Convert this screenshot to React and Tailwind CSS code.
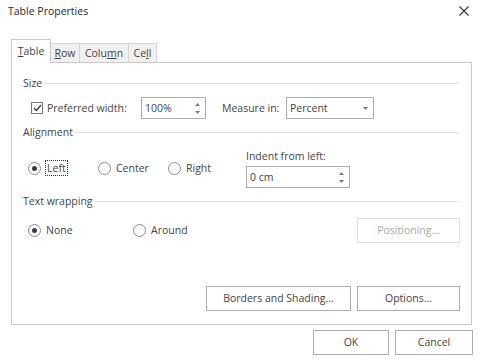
import React from "react";

function SpinArrows() {
  return (
    <div className="flex flex-col items-center gap-[5px] mr-[5px]">
      <svg width="5" height="3" viewBox="0 0 5 3"><path d="M0 3 L2.5 0 L5 3Z" fill="#7a7a7a" /></svg>
      <svg width="5" height="3" viewBox="0 0 5 3"><path d="M0 0 L2.5 3 L5 0Z" fill="#7a7a7a" /></svg>
    </div>
  );
}

function Radio({ checked }) {
  return (
    <span className="w-[13px] h-[13px] rounded-full border border-[#8c8c8c] bg-white flex items-center justify-center shrink-0">
      {checked && <span className="w-[5px] h-[5px] rounded-full bg-[#3a3a3a]" />}
    </span>
  );
}

function GroupHeader({ label }) {
  return (
    <div className="flex items-center h-[16px] ml-[11px] mr-[12px]">
      <span>{label}</span>
      <div className="flex-1 h-px bg-[#e2e2e2] ml-[2px]" />
    </div>
  );
}

function Btn({ children, className = "" }) {
  return (
    <div className={"h-[25px] border border-[#adadad] bg-white flex items-center justify-center " + className}>
      {children}
    </div>
  );
}

export default function App() {
  return (
    <div className="w-[481px] h-[363px] bg-white overflow-hidden font-['Open_Sans',sans-serif] text-[10.5px] text-[#454545] leading-none">
      {/* Title */}
      <div className="flex items-center justify-between h-[22px] pl-[8px] pr-[12px]">
        <span className="text-[#2a2a2a]">Table Properties</span>
        <svg width="10" height="10" viewBox="0 0 10 10">
          <path d="M0.5 0.5 L9.5 9.5 M9.5 0.5 L0.5 9.5" stroke="#333" strokeWidth="1.1" />
        </svg>
      </div>

      {/* Tabs */}
      <div className="ml-[11px] mt-[17px] flex items-end h-[23px] relative z-10">
        <div className="w-[40px] h-[24px] -mb-px border-l border-t border-r border-[#c9c9c9] bg-white flex items-center justify-center">
          <span><span className="underline">T</span>able</span>
        </div>
        <div className="w-[29px] h-[19px] border-t border-r border-[#d6d6d6] bg-[#f0f0f0] flex items-center justify-center">
          <span><span className="underline">R</span>ow</span>
        </div>
        <div className="w-[49px] h-[19px] border-t border-r border-[#d6d6d6] bg-[#f0f0f0] flex items-center justify-center">
          <span>Colu<span className="underline">m</span>n</span>
        </div>
        <div className="w-[28px] h-[19px] border-t border-r border-[#d6d6d6] bg-[#f0f0f0] flex items-center justify-center">
          <span>Ce<span className="underline">l</span>l</span>
        </div>
      </div>

      {/* Panel */}
      <div className="ml-[11px] w-[461px] h-[263px] border border-[#c9c9c9] flex flex-col pt-[12px] pb-[13px]">
        <GroupHeader label="Size" />

        <div className="flex items-center h-[22px] mt-[6px] ml-[19px]">
          <div className="w-[110px] flex items-center">
            <span className="w-[12px] h-[12px] border border-[#7a7a7a] flex items-center justify-center">
              <svg width="9" height="8" viewBox="0 0 9 8">
                <path d="M1 4 L3.5 6.5 L8 1" stroke="#333" strokeWidth="1.2" fill="none" />
              </svg>
            </span>
            <span className="ml-[4px]">Preferred width:</span>
          </div>
          <div className="w-[65px] h-[22px] border border-[#acacac] flex items-center justify-between pl-[3px]">
            <span>100%</span>
            <SpinArrows />
          </div>
          <div className="w-[64px] ml-[16px]">Measure in:</div>
          <div className="w-[88px] h-[22px] border border-[#acacac] flex items-center justify-between pl-[3px] pr-[5px]">
            <span>Percent</span>
            <svg width="5" height="3" viewBox="0 0 5 3"><path d="M0 0 L2.5 3 L5 0Z" fill="#7a7a7a" /></svg>
          </div>
        </div>

        <div className="mt-[5px]">
          <GroupHeader label="Alignment" />
        </div>

        <div className="flex items-center h-[40px] mt-[8px] ml-[16px]">
          <div className="w-[70px] flex items-center">
            <Radio checked />
            <span className="ml-[4px] border border-dotted border-[#333] px-[1px] h-[16px] flex items-center">Left</span>
          </div>
          <div className="w-[70px] flex items-center">
            <Radio />
            <span className="ml-[5px]">Center</span>
          </div>
          <div className="w-[78px] flex items-center">
            <Radio />
            <span className="ml-[5px]">Right</span>
          </div>
          <div className="w-[104px] flex flex-col">
            <span className="h-[16px] flex items-center">Indent from left:</span>
            <div className="mt-[2px] w-[104px] h-[22px] border border-[#acacac] flex items-center justify-between pl-[3px]">
              <span>0 cm</span>
              <SpinArrows />
            </div>
          </div>
        </div>

        <div className="mt-[5px]">
          <GroupHeader label="Text wrapping" />
        </div>

        <div className="flex items-center h-[25px] mt-[9px] ml-[16px] mr-[11px]">
          <div className="w-[105px] flex items-center">
            <Radio checked />
            <span className="ml-[5px]">None</span>
          </div>
          <div className="flex items-center">
            <Radio />
            <span className="ml-[5px]">Around</span>
          </div>
          <div className="ml-auto w-[103px] h-[25px] border border-[#e1e1e1] flex items-center justify-center text-[#a8a8a8]">
            Positioning...
          </div>
        </div>

        <div className="flex-1" />

        <div className="flex justify-end gap-[6px] mr-[11px]">
          <Btn className="w-[145px]">Borders and Shading...</Btn>
          <Btn className="w-[103px]">Options...</Btn>
        </div>
      </div>

      {/* Bottom buttons */}
      <div className="flex justify-end gap-[6px] mt-[5px] mr-[8px]">
        <Btn className="w-[76px] border-[#2f7bc9]">OK</Btn>
        <Btn className="w-[78px]">Cancel</Btn>
      </div>
    </div>
  );
}
